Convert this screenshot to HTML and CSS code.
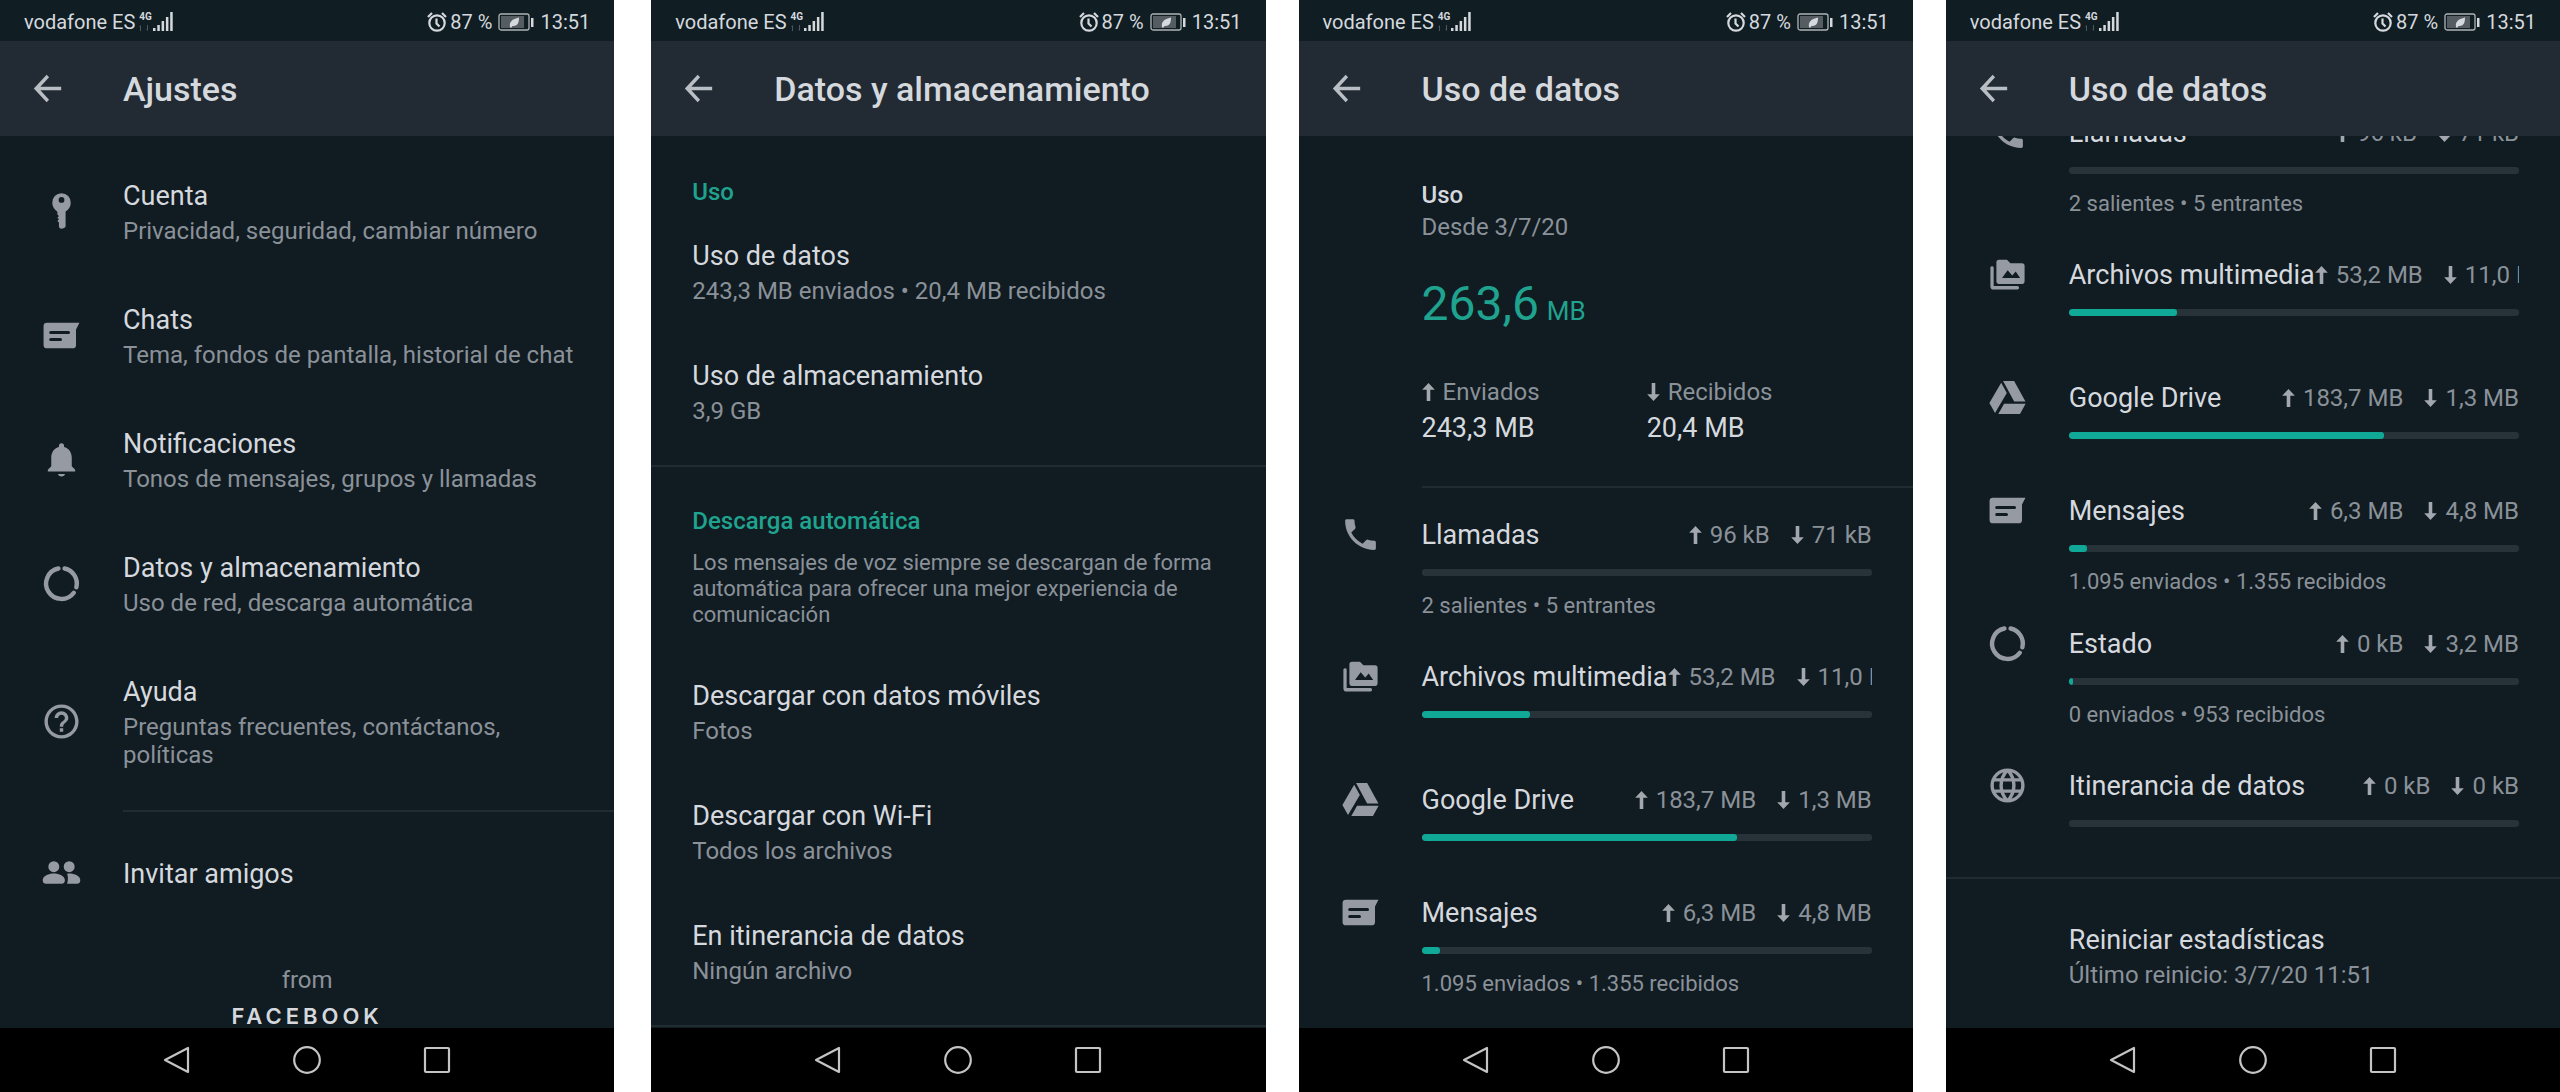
FILE: index.html
```html
<!DOCTYPE html>
<html lang="es">
<head>
    <meta charset="UTF-8">
    <meta name="viewport" content="width=device-width, initial-scale=1.0">
    <title>Ajustes - Uso de datos</title>
    <link rel="stylesheet" href="styles.css">
</head>
<body>
    <!-- Iconos compartidos -->
    <svg class="sprite" aria-hidden="true">
        <symbol id="i-back" viewBox="0 0 24 24"><path d="M20 11H7.830l5.090-5.590L11.500 4 4 12l7.500 8 1.410-1.410L7.830 13H20z"/></symbol>
        <symbol id="i-key" viewBox="0 0 24 24"><path fill-rule="evenodd" d="M12 1.300a5.400 5.400 0 0 0-5.400 5.700c.1 2.300 1.300 3.800 3 5.100v1.600l.9.900-.9 1 .9 1-.9 1 .9.900v2.300c0 .7.700 1.300 1.500 1.300s2.400-.6 2.400-1.400v-8.700c1.700-1.200 3-2.700 3-5A5.400 5.400 0 0 0 12 1.300zm0 2.200a1.700 1.700 0 1 1 0 3.400 1.700 1.700 0 0 1 0-3.400z"/></symbol>
        <symbol id="i-chat" viewBox="0 0 24 24"><path fill-rule="evenodd" d="M3.500 4.500h19l-2 4v9a2 2 0 0 1-2 2h-15a2 2 0 0 1-2-2v-11a2 2 0 0 1 2-2zm2.200 4.800a.9.900 0 0 0 0 1.800h10.400a.9.900 0 0 0 0-1.800zm0 4.100a.9.900 0 0 0 0 1.800h5.700a.9.900 0 0 0 0-1.800z"/></symbol>
        <symbol id="i-bell" viewBox="0 0 24 24"><path d="M12 22c1.100 0 2-.7 2-1.500h-4c0 .8.900 1.500 2 1.500zm6-6v-5c0-3.070-1.640-5.640-4.500-6.320V4a1.500 1.500 0 0 0-3 0v.68C7.630 5.360 6 7.920 6 11v5l-2 2v1h16v-1l-2-2z"/></symbol>
        <symbol id="i-data" viewBox="0 0 24 24"><path d="M13.800 3.200A9 9 0 0 1 20.700 14.200M19.200 17.400A9 9 0 1 1 10.200 3.200" fill="none" stroke="currentColor" stroke-width="2.600" stroke-linecap="round"/></symbol>
        <symbol id="i-help" viewBox="0 0 24 24"><path d="M11 18h2v-2h-2v2zm1-16C6.480 2 2 6.480 2 12s4.480 10 10 10 10-4.480 10-10S17.520 2 12 2zm0 18c-4.410 0-8-3.590-8-8s3.590-8 8-8 8 3.590 8 8-3.590 8-8 8zm0-14c-2.210 0-4 1.790-4 4h2c0-1.100.9-2 2-2s2 .9 2 2c0 2-3 1.750-3 5h2c0-2.250 3-2.500 3-5 0-2.210-1.790-4-4-4z"/></symbol>
        <symbol id="i-people" viewBox="0 0 24 24"><circle cx="7.500" cy="8" r="3.200"/><circle cx="16.500" cy="8" r="3.200"/><path d="M1 16c0-2.700 3.500-4 6.500-4s6.500 1.300 6.500 4c0 1.500-.8 2-2 2H3c-1.200 0-2-.5-2-2zM15.300 12.100c3.400-.4 7.700.9 7.700 3.900 0 1.500-.8 2-2 2h-5.700c.6-2.300.6-4.300 0-5.900z"/></symbol>
        <symbol id="i-phone" viewBox="0 0 24 24"><path d="M6.600 10.800c1.400 2.800 3.800 5.100 6.600 6.600l2.200-2.200c.3-.3.700-.4 1-.2 1.100.4 2.300.6 3.600.6.600 0 1 .4 1 1V20c0 .6-.4 1-1 1C10.600 21 3 13.400 3 4c0-.6.400-1 1-1h3.500c.6 0 1 .4 1 1 0 1.200.2 2.500.6 3.600.1.300 0 .7-.2 1z"/></symbol>
        <symbol id="i-media" viewBox="0 0 24 24"><path fill-rule="evenodd" d="M3.900 7.800a1 1 0 0 0-1.900 0V19a1.800 1.800 0 0 0 1.800 1.800h14a1 1 0 0 0 0-2H3.900zM20.500 5.400h-6.800l-2-2.100H7a1.500 1.500 0 0 0-1.500 1.500V16A1.500 1.500 0 0 0 7 17.500h13.500A1.500 1.500 0 0 0 22 16V6.900a1.500 1.500 0 0 0-1.500-1.500zM8.800 14l3.300-4.500 2.700 3.100 2-2.300 2.600 3.700z"/></symbol>
        <symbol id="i-drive" viewBox="0 0 24 24"><path d="M8.300 3.300L1.400 15.200 4.700 21l6.900-11.700zM10 15.600l-3.400 6h12.700l3.300-6zM22.500 14.400L15.900 2.300H9.400l6.500 12.100z"/></symbol>
        <symbol id="i-globe" viewBox="0 0 24 24"><path d="M12 3a9 9 0 1 0 0 18 9 9 0 0 0 0-18zM12 3c-5 5-5 13 0 18M12 3c5 5 5 13 0 18M4 8.700h16M4 15.300h16" fill="none" stroke="currentColor" stroke-width="2"/></symbol>
        <symbol id="i-up" viewBox="0 0 14 20"><path d="M7 0l7 7.500H9V20H5V7.500H0z"/></symbol>
        <symbol id="i-down" viewBox="0 0 14 20"><path d="M7 20l7-7.500H9V0H5v12.500H0z"/></symbol>
        <symbol id="i-traffic" viewBox="0 0 10 6"><path d="M0 2l2-2v6H1V2zM9 0v6L7 4h1V0z"/></symbol>
        <symbol id="i-signal" viewBox="0 0 20 20"><path d="M0 16h2.500v3H0zM4.300 13h2.500v6H4.300zM8.600 9h2.500v10H8.600zM12.900 5h2.500v14h-2.500zM17.200 0h2.500v19h-2.500z"/></symbol>
        <symbol id="i-alarm" viewBox="0 0 20 20"><g fill="none" stroke="currentColor" stroke-width="2.200"><circle cx="10" cy="11" r="7.700"/><path d="M9.500 6.500v5l3 3M1 5l4-4M19 5l-4-4"/></g></symbol>
        <symbol id="i-battery" viewBox="0 0 36 18"><rect x="1" y="1" width="30" height="16" rx="2" fill="none" stroke="#aeb4b7" stroke-width="1.300"/><rect x="3" y="3" width="23" height="12" fill="#555d63"/><path d="M33 5h2.500v9H33z"/><path d="M12 14c-1-5 2-8 9-9.500 0 5-1 9-6.500 8.500L13 15z"/></symbol>
        <symbol id="i-nav-back" viewBox="0 0 28 28"><path d="M25 2v24L2 14z" fill="none" stroke="currentColor" stroke-width="2.200" stroke-linejoin="round"/></symbol>
        <symbol id="i-nav-home" viewBox="0 0 28 28"><circle cx="14" cy="14" r="12.800" fill="none" stroke="currentColor" stroke-width="2.200"/></symbol>
        <symbol id="i-nav-recent" viewBox="0 0 28 28"><rect x="2" y="2" width="24" height="24" rx="1" fill="none" stroke="currentColor" stroke-width="2.200"/></symbol>
    </svg>

    <main class="screens">
        <!-- Ajustes -->
        <section class="phone phone-first">
            <div class="status-bar">
                <span>vodafone ES</span>
                <span class="network">4G<svg><use href="#i-traffic"/></svg></span>
                <svg class="signal"><use href="#i-signal"/></svg>
                <svg class="alarm"><use href="#i-alarm"/></svg>
                <span>87 %</span>
                <svg class="battery"><use href="#i-battery"/></svg>
                <span>13:51</span>
            </div>
            <header class="app-bar">
                <button class="back" aria-label="Atrás"><svg><use href="#i-back"/></svg></button>
                <h1>Ajustes</h1>
            </header>
            <div class="content settings">
                <a href="#" class="row">
                    <svg class="icon"><use href="#i-key"/></svg>
                    <div class="text"><span class="name">Cuenta</span><span class="detail">Privacidad, seguridad, cambiar número</span></div>
                </a>
                <a href="#" class="row">
                    <svg class="icon"><use href="#i-chat"/></svg>
                    <div class="text"><span class="name">Chats</span><span class="detail">Tema, fondos de pantalla, historial de chat</span></div>
                </a>
                <a href="#" class="row">
                    <svg class="icon"><use href="#i-bell"/></svg>
                    <div class="text"><span class="name">Notificaciones</span><span class="detail">Tonos de mensajes, grupos y llamadas</span></div>
                </a>
                <a href="#" class="row">
                    <svg class="icon"><use href="#i-data"/></svg>
                    <div class="text"><span class="name">Datos y almacenamiento</span><span class="detail">Uso de red, descarga automática</span></div>
                </a>
                <a href="#" class="row">
                    <svg class="icon"><use href="#i-help"/></svg>
                    <div class="text"><span class="name">Ayuda</span><span class="detail">Preguntas frecuentes, contáctanos, políticas</span></div>
                </a>
                <hr class="inset">
                <a href="#" class="row invite">
                    <svg class="icon"><use href="#i-people"/></svg>
                    <div class="text"><span class="name">Invitar amigos</span></div>
                </a>
                <footer class="brand">
                    <span class="from">from</span>
                    <span class="company">FACEBOOK</span>
                </footer>
            </div>
            <nav class="nav-bar">
                <button aria-label="Atrás"><svg><use href="#i-nav-back"/></svg></button>
                <button aria-label="Inicio"><svg><use href="#i-nav-home"/></svg></button>
                <button aria-label="Recientes"><svg><use href="#i-nav-recent"/></svg></button>
            </nav>
        </section>

        <!-- Datos y almacenamiento -->
        <section class="phone">
            <div class="status-bar">
                <span>vodafone ES</span>
                <span class="network">4G<svg><use href="#i-traffic"/></svg></span>
                <svg class="signal"><use href="#i-signal"/></svg>
                <svg class="alarm"><use href="#i-alarm"/></svg>
                <span>87 %</span>
                <svg class="battery"><use href="#i-battery"/></svg>
                <span>13:51</span>
            </div>
            <header class="app-bar">
                <button class="back" aria-label="Atrás"><svg><use href="#i-back"/></svg></button>
                <h1>Datos y almacenamiento</h1>
            </header>
            <div class="content storage">
                <h2>Uso</h2>
                <a href="#" class="option"><span class="name">Uso de datos</span><span class="detail">243,3 MB enviados • 20,4 MB recibidos</span></a>
                <a href="#" class="option"><span class="name">Uso de almacenamiento</span><span class="detail">3,9 GB</span></a>
                <hr>
                <h2>Descarga automática</h2>
                <p>Los mensajes de voz siempre se descargan de forma automática para ofrecer una mejor experiencia de comunicación</p>
                <a href="#" class="option"><span class="name">Descargar con datos móviles</span><span class="detail">Fotos</span></a>
                <a href="#" class="option"><span class="name">Descargar con Wi-Fi</span><span class="detail">Todos los archivos</span></a>
                <a href="#" class="option"><span class="name">En itinerancia de datos</span><span class="detail">Ningún archivo</span></a>
                <hr>
            </div>
            <nav class="nav-bar">
                <button aria-label="Atrás"><svg><use href="#i-nav-back"/></svg></button>
                <button aria-label="Inicio"><svg><use href="#i-nav-home"/></svg></button>
                <button aria-label="Recientes"><svg><use href="#i-nav-recent"/></svg></button>
            </nav>
        </section>

        <!-- Uso de datos -->
        <section class="phone">
            <div class="status-bar">
                <span>vodafone ES</span>
                <span class="network">4G<svg><use href="#i-traffic"/></svg></span>
                <svg class="signal"><use href="#i-signal"/></svg>
                <svg class="alarm"><use href="#i-alarm"/></svg>
                <span>87 %</span>
                <svg class="battery"><use href="#i-battery"/></svg>
                <span>13:51</span>
            </div>
            <header class="app-bar">
                <button class="back" aria-label="Atrás"><svg><use href="#i-back"/></svg></button>
                <h1>Uso de datos</h1>
            </header>
            <div class="content">
                <div class="summary">
                    <h2>Uso</h2>
                    <span class="detail">Desde 3/7/20</span>
                    <div class="total">263,6<small>MB</small></div>
                    <div class="split">
                        <div><span class="amount"><svg><use href="#i-up"/></svg>Enviados</span><span class="name">243,3 MB</span></div>
                        <div><span class="amount"><svg><use href="#i-down"/></svg>Recibidos</span><span class="name">20,4 MB</span></div>
                    </div>
                </div>
                <hr class="inset">
                <div class="usage">
                    <svg class="icon"><use href="#i-phone"/></svg>
                    <div class="usage-body">
                        <div class="usage-head"><span class="name">Llamadas</span><div class="amounts"><span class="amount"><svg><use href="#i-up"/></svg>96 kB</span><span class="amount"><svg><use href="#i-down"/></svg>71 kB</span></div></div>
                        <div class="bar"></div>
                        <span class="count">2 salientes • 5 entrantes</span>
                    </div>
                </div>
                <div class="usage no-count">
                    <svg class="icon"><use href="#i-media"/></svg>
                    <div class="usage-body">
                        <div class="usage-head"><span class="name">Archivos multimedia</span><div class="amounts"><span class="amount"><svg><use href="#i-up"/></svg>53,2 MB</span><span class="amount"><svg><use href="#i-down"/></svg>11,0 MB</span></div></div>
                        <div class="bar"><div class="fill" style="width: 24%"></div></div>
                    </div>
                </div>
                <div class="usage no-count tight">
                    <svg class="icon"><use href="#i-drive"/></svg>
                    <div class="usage-body">
                        <div class="usage-head"><span class="name">Google Drive</span><div class="amounts"><span class="amount"><svg><use href="#i-up"/></svg>183,7 MB</span><span class="amount"><svg><use href="#i-down"/></svg>1,3 MB</span></div></div>
                        <div class="bar"><div class="fill" style="width: 70%"></div></div>
                    </div>
                </div>
                <div class="usage tight">
                    <svg class="icon"><use href="#i-chat"/></svg>
                    <div class="usage-body">
                        <div class="usage-head"><span class="name">Mensajes</span><div class="amounts"><span class="amount"><svg><use href="#i-up"/></svg>6,3 MB</span><span class="amount"><svg><use href="#i-down"/></svg>4,8 MB</span></div></div>
                        <div class="bar"><div class="fill" style="width: 4%"></div></div>
                        <span class="count">1.095 enviados • 1.355 recibidos</span>
                    </div>
                </div>
                <div class="usage">
                    <svg class="icon"><use href="#i-data"/></svg>
                </div>
            </div>
            <nav class="nav-bar">
                <button aria-label="Atrás"><svg><use href="#i-nav-back"/></svg></button>
                <button aria-label="Inicio"><svg><use href="#i-nav-home"/></svg></button>
                <button aria-label="Recientes"><svg><use href="#i-nav-recent"/></svg></button>
            </nav>
        </section>

        <!-- Uso de datos, final de la lista -->
        <section class="phone">
            <div class="status-bar">
                <span>vodafone ES</span>
                <span class="network">4G<svg><use href="#i-traffic"/></svg></span>
                <svg class="signal"><use href="#i-signal"/></svg>
                <svg class="alarm"><use href="#i-alarm"/></svg>
                <span>87 %</span>
                <svg class="battery"><use href="#i-battery"/></svg>
                <span>13:51</span>
            </div>
            <header class="app-bar">
                <button class="back" aria-label="Atrás"><svg><use href="#i-back"/></svg></button>
                <h1>Uso de datos</h1>
            </header>
            <div class="content scrolled">
                <div class="usage">
                    <svg class="icon"><use href="#i-phone"/></svg>
                    <div class="usage-body">
                        <div class="usage-head"><span class="name">Llamadas</span><div class="amounts"><span class="amount"><svg><use href="#i-up"/></svg>96 kB</span><span class="amount"><svg><use href="#i-down"/></svg>71 kB</span></div></div>
                        <div class="bar"></div>
                        <span class="count">2 salientes • 5 entrantes</span>
                    </div>
                </div>
                <div class="usage no-count">
                    <svg class="icon"><use href="#i-media"/></svg>
                    <div class="usage-body">
                        <div class="usage-head"><span class="name">Archivos multimedia</span><div class="amounts"><span class="amount"><svg><use href="#i-up"/></svg>53,2 MB</span><span class="amount"><svg><use href="#i-down"/></svg>11,0 MB</span></div></div>
                        <div class="bar"><div class="fill" style="width: 24%"></div></div>
                    </div>
                </div>
                <div class="usage no-count tight">
                    <svg class="icon"><use href="#i-drive"/></svg>
                    <div class="usage-body">
                        <div class="usage-head"><span class="name">Google Drive</span><div class="amounts"><span class="amount"><svg><use href="#i-up"/></svg>183,7 MB</span><span class="amount"><svg><use href="#i-down"/></svg>1,3 MB</span></div></div>
                        <div class="bar"><div class="fill" style="width: 70%"></div></div>
                    </div>
                </div>
                <div class="usage tight">
                    <svg class="icon"><use href="#i-chat"/></svg>
                    <div class="usage-body">
                        <div class="usage-head"><span class="name">Mensajes</span><div class="amounts"><span class="amount"><svg><use href="#i-up"/></svg>6,3 MB</span><span class="amount"><svg><use href="#i-down"/></svg>4,8 MB</span></div></div>
                        <div class="bar"><div class="fill" style="width: 4%"></div></div>
                        <span class="count">1.095 enviados • 1.355 recibidos</span>
                    </div>
                </div>
                <div class="usage">
                    <svg class="icon"><use href="#i-data"/></svg>
                    <div class="usage-body">
                        <div class="usage-head"><span class="name">Estado</span><div class="amounts"><span class="amount"><svg><use href="#i-up"/></svg>0 kB</span><span class="amount"><svg><use href="#i-down"/></svg>3,2 MB</span></div></div>
                        <div class="bar"><div class="fill" style="width: 1%"></div></div>
                        <span class="count">0 enviados • 953 recibidos</span>
                    </div>
                </div>
                <div class="usage no-count last">
                    <svg class="icon"><use href="#i-globe"/></svg>
                    <div class="usage-body">
                        <div class="usage-head"><span class="name">Itinerancia de datos</span><div class="amounts"><span class="amount"><svg><use href="#i-up"/></svg>0 kB</span><span class="amount"><svg><use href="#i-down"/></svg>0 kB</span></div></div>
                        <div class="bar"></div>
                    </div>
                </div>
                <hr>
                <button class="reset"><span class="name">Reiniciar estadísticas</span><span class="detail">Último reinicio: 3/7/20 11:51</span></button>
            </div>
            <nav class="nav-bar">
                <button aria-label="Atrás"><svg><use href="#i-nav-back"/></svg></button>
                <button aria-label="Inicio"><svg><use href="#i-nav-home"/></svg></button>
                <button aria-label="Recientes"><svg><use href="#i-nav-recent"/></svg></button>
            </nav>
        </section>
    </main>
</body>
</html>
```
FILE: styles.css
```css
* {
    box-sizing: border-box;
}
body {
    margin: 0;
    background-color: #ffffff;
    font-family: Roboto, "Liberation Sans", sans-serif;
    color: #d5d9de;
}
a {
    color: inherit;
    text-decoration: none;
}
button {
    border: none;
    padding: 0;
    background: none;
    color: inherit;
    font: inherit;
    text-align: left;
    cursor: pointer;
}
svg {
    display: block;
    flex: none;
    fill: currentColor;
}
.sprite {
    position: absolute;
    width: 0;
    height: 0;
}
.screens {
    display: flex;
    gap: 33px;
    height: 100vh;
}
.phone {
    flex: 1;
    min-width: 0;
    display: flex;
    flex-direction: column;
    background-color: #111b22;
}
.phone-first {
    margin-right: 4px;
}

/* Barra de estado */
.status-bar {
    display: flex;
    align-items: center;
    height: 41px;
    flex: none;
    padding: 2px 24px 0;
    background-color: #101d23;
    font-size: 20px;
}
.network {
    margin: 0 1px 0 4px;
    font-size: 10px;
    font-weight: 700;
    line-height: 10px;
}
.network svg {
    width: 10px;
    height: 6px;
    margin-top: 3px;
    color: #4d585e;
}
.signal {
    width: 20px;
    height: 20px;
}
.alarm {
    width: 20px;
    height: 20px;
    margin-left: auto;
    margin-right: 3px;
}
.battery {
    width: 36px;
    height: 18px;
    margin: 0 6px;
}

/* Cabecera */
.app-bar {
    display: flex;
    align-items: center;
    height: 95px;
    flex: none;
    background-color: #222b33;
}
.back {
    width: 123px;
    padding-left: 27px;
}
.back svg {
    width: 41px;
    height: 41px;
    color: #b9bec4;
}
.app-bar h1 {
    margin: 0;
    font-size: 34px;
    font-weight: 500;
}

.content {
    flex: 1;
    min-height: 0;
    overflow: hidden;
}
.name {
    display: block;
    font-size: 27px;
    line-height: 36px;
}
.detail {
    display: block;
    margin-top: 3px;
    font-size: 24px;
    line-height: 28px;
    color: #8a9198;
}
.icon {
    width: 41px;
    height: 41px;
    margin: 0 41px;
    color: #969ba3;
}
hr {
    margin: 0;
    border: none;
    border-top: 2px solid #212b32;
}
hr.inset {
    margin-left: 123px;
}

/* Ajustes */
.settings {
    padding-top: 13px;
}
.row {
    display: flex;
    align-items: center;
    padding: 29px 40px 28px 0;
}
.settings hr {
    margin-top: 13px;
}
.invite {
    padding: 41px 40px 41px 0;
}
.brand {
    padding-top: 31px;
    text-align: center;
}
.brand span {
    display: block;
}
.from {
    font-size: 24px;
    line-height: 28px;
    color: #8a9198;
}
.company {
    font-family: Inter, sans-serif;
    font-size: 22px;
    font-weight: 600;
    line-height: 44px;
    letter-spacing: 4px;
}

/* Datos y almacenamiento */
.storage {
    padding-top: 42px;
}
.storage h2 {
    margin: 0 0 5px;
    padding: 0 41px;
    font-size: 24px;
    font-weight: 500;
    line-height: 28px;
    color: #1fa38f;
}
.storage p {
    margin: 0;
    padding: 10px 41px 23px;
    font-size: 22px;
    line-height: 26px;
    color: #8a9198;
}
.option {
    display: block;
    padding: 27px 41px 26px;
}
.storage hr {
    margin: 14px 0 40px;
}

/* Uso de datos */
.summary {
    padding: 44px 41px 40px 123px;
}
.summary h2 {
    margin: 0;
    font-size: 24px;
    font-weight: 500;
    line-height: 30px;
}
.total {
    display: flex;
    align-items: baseline;
    gap: 8px;
    padding: 35px 0 39px;
    font-size: 48px;
    line-height: 56px;
    color: #1fa38f;
}
.total small {
    font-size: 26px;
}
.split {
    display: grid;
    grid-template-columns: 1fr 1fr;
}
.split .name {
    margin-top: 4px;
}
.amount {
    display: flex;
    align-items: center;
    gap: 8px;
    flex: none;
    font-size: 24px;
    line-height: 28px;
    color: #8a9198;
}
.amount svg {
    width: 13px;
    height: 18px;
    color: #a3a8ae;
}
.usage {
    display: flex;
    padding-bottom: 40px;
    flex: none;
}
.usage .icon {
    margin-top: -3px;
}
.usage.tight {
    padding-bottom: 31px;
}
.usage.no-count {
    padding-bottom: 64px;
}
.usage.no-count.tight {
    padding-bottom: 54px;
}
.usage.no-count.last {
    padding-bottom: 50px;
}
.usage-body {
    flex: 1;
    min-width: 0;
    padding-right: 41px;
}
.usage-head {
    display: flex;
    align-items: center;
    justify-content: space-between;
    white-space: nowrap;
}
.amounts {
    display: flex;
    gap: 21px;
    min-width: 0;
    overflow: hidden;
}
.bar {
    height: 7px;
    margin: 16px 0;
    border-radius: 3px;
    background-color: #283239;
    overflow: hidden;
}
.no-count .bar {
    margin-bottom: 0;
}
.fill {
    height: 100%;
    border-radius: 3px;
    background-color: #10a998;
}
.count {
    display: block;
    font-size: 22px;
    line-height: 27px;
    color: #8a9198;
}
hr.inset + .usage {
    padding-top: 29px;
}
.scrolled {
    display: flex;
    flex-direction: column;
    justify-content: flex-end;
}
.reset {
    padding: 43px 41px 39px 123px;
}

/* Botones del sistema */
.nav-bar {
    display: flex;
    justify-content: center;
    align-items: center;
    gap: 102px;
    height: 64px;
    flex: none;
    background-color: #000000;
    color: #c4c4c4;
}
.nav-bar svg {
    width: 28px;
    height: 28px;
}
```
